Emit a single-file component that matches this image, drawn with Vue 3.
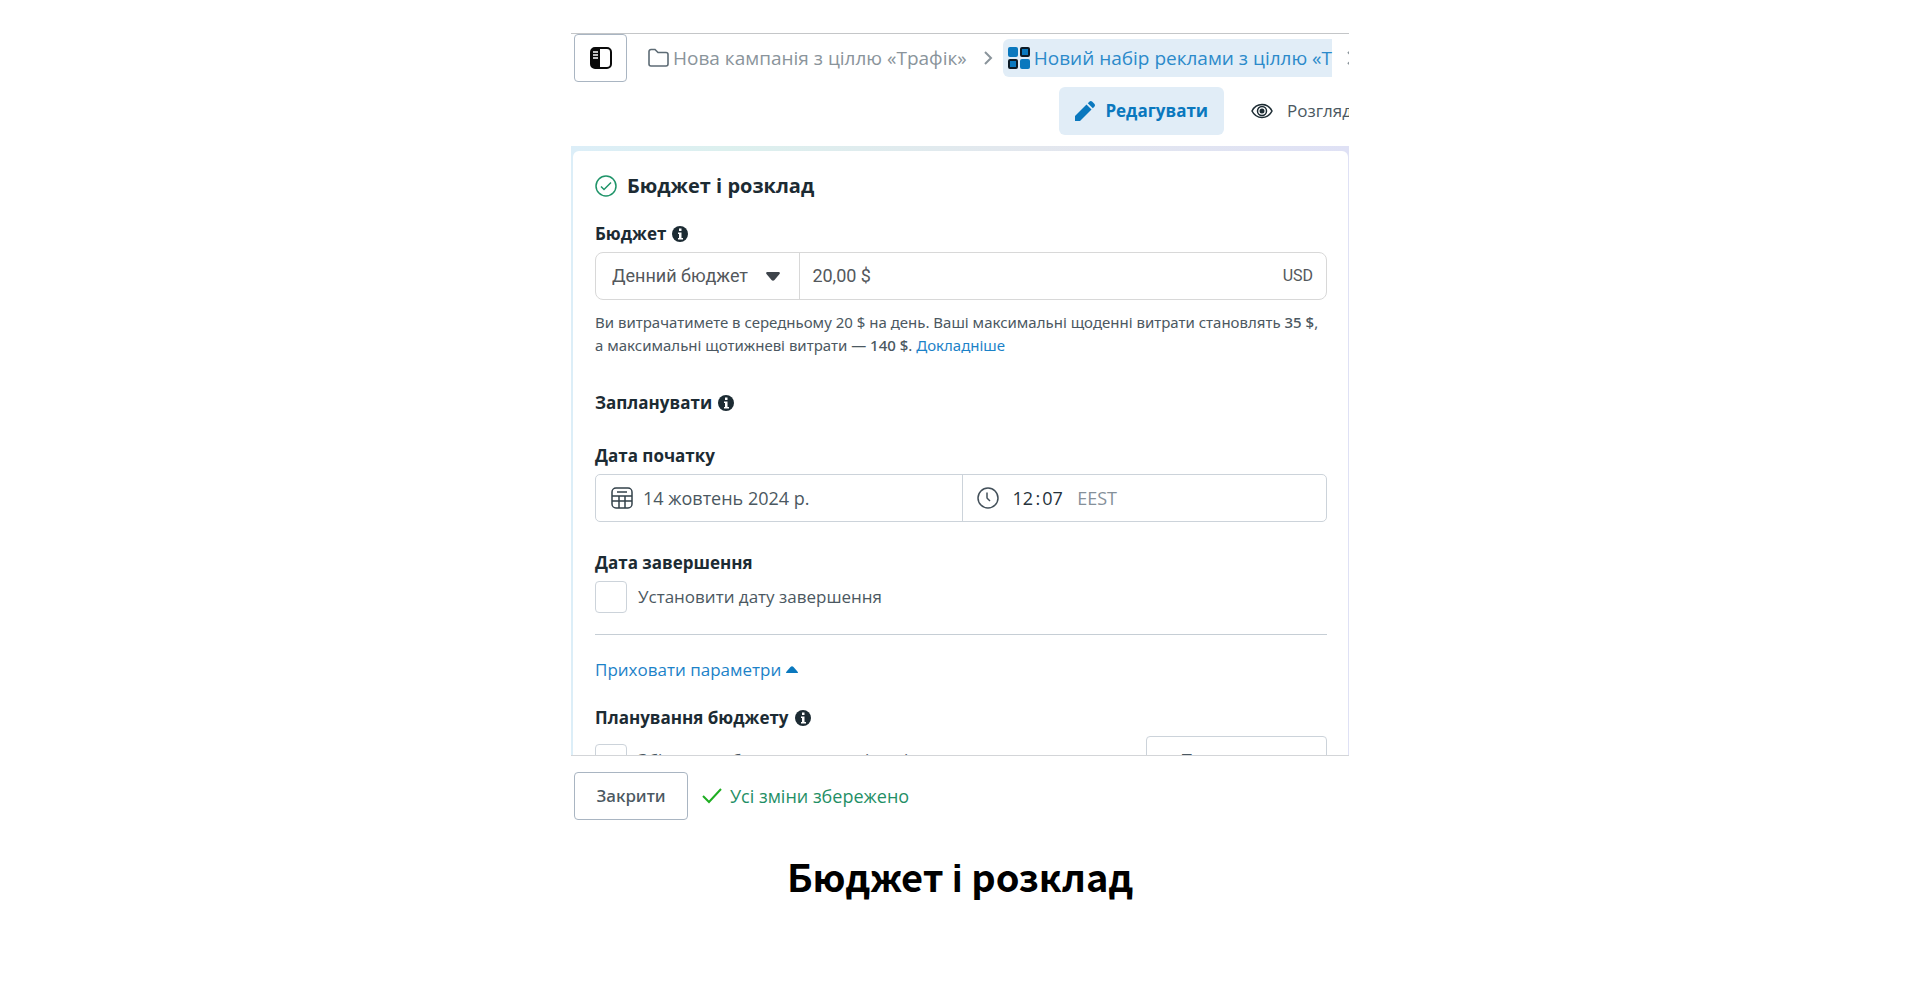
<template>
  <main class="page">
    <section class="panel">
      <header class="crumbs">
        <button class="toggle" type="button" aria-label="Панель">
          <svg width="22" height="22" viewBox="0 0 22 22">
            <rect x="1" y="1" width="20" height="20" rx="4" fill="#fff" stroke="#0a0a0a" stroke-width="2" />
            <path d="M5 1h5v20H5a4 4 0 0 1-4-4V5a4 4 0 0 1 4-4z" fill="#0a0a0a" />
            <path d="M3 5h5M3 8h5M3 11h5" stroke="#fff" stroke-width="1.300" />
          </svg>
        </button>
        <nav class="trail">
          <a href="#" class="crumb">
            <svg width="21" height="20" viewBox="0 0 21 20" fill="none" stroke="#5d6b75" stroke-width="1.6">
              <path d="M1 16V3.500a2 2 0 0 1 2-2h4l3 3h8a2 2 0 0 1 2 2V16a2 2 0 0 1-2 2H3a2 2 0 0 1-2-2z" />
            </svg>
            <span>Нова кампанія з ціллю «Трафік»</span>
          </a>
          <svg class="chevron" width="10" height="16" viewBox="0 0 10 16" fill="none" stroke="#8a949b" stroke-width="2">
            <path d="M2 2l6 6-6 6" />
          </svg>
          <a href="#" class="crumb active">
            <svg width="22" height="22" viewBox="0 0 22 22" fill="#0a78be">
              <rect x="0" y="0" width="10" height="10" rx="2" />
              <rect x="13" y="1" width="8" height="8" rx="1" stroke="#0b1a26" stroke-width="2" />
              <rect x="1" y="13" width="8" height="8" rx="1" stroke="#0b1a26" stroke-width="2" />
              <rect x="12" y="12" width="10" height="10" rx="2" />
            </svg>
            <span>Новий набір реклами з ціллю «Т</span>
          </a>
          <svg class="chevron last" width="10" height="16" viewBox="0 0 10 16" fill="none" stroke="#8a949b" stroke-width="2">
            <path d="M2 2l6 6-6 6" />
          </svg>
        </nav>
      </header>

      <div class="modes">
        <button class="mode selected" type="button">
          <svg width="20" height="20" viewBox="0 0 20 20" fill="#0a78be">
            <path d="M0 20v-5L11.500 3.500l5 5L5 20z" />
            <path d="M12.800 2.200l1.500-1.500a2.200 2.200 0 0 1 3 0l2 2a2.200 2.200 0 0 1 0 3l-1.500 1.500z" />
          </svg>
          Редагувати
        </button>
        <button class="mode" type="button">
          <svg width="22" height="16" viewBox="0 0 22 16" fill="none" stroke="#1c2b33">
            <path d="M1 8c2-4 6-6.500 10-6.500S19 4 21 8c-2 4-6 6.500-10 6.500S3 12 1 8z" stroke-width="1.500" />
            <circle cx="11" cy="8" r="4.500" stroke-width="1.500" />
            <circle cx="11" cy="8" r="2.500" fill="#1c2b33" stroke="none" />
          </svg>
          Розгляд
        </button>
      </div>

      <div class="viewport">
        <form class="card" @submit.prevent>
          <h2>
            <svg width="22" height="22" viewBox="0 0 22 22" fill="none" stroke="#1f9469" stroke-width="1.500">
              <circle cx="11" cy="11" r="10" />
              <path d="M6 11.500l3 3 7-7" />
            </svg>
            Бюджет і розклад
          </h2>

          <div class="label-row">
            <label for="amount">Бюджет</label>
            <svg class="info" viewBox="0 0 16 16">
              <circle cx="8" cy="8" r="8" fill="#1c2b33" />
              <path d="M7 2.500h2.500V5H7zM6 6.500h3.500V12H11v1.500H6V12h1V8H6z" fill="#fff" />
            </svg>
          </div>
          <div class="field budget">
            <div class="kind">
              <select v-model="kind" aria-label="Тип бюджету">
                <option>Денний бюджет</option>
              </select>
              <svg width="14" height="9" viewBox="0 0 14 9" fill="#3e444b">
                <path d="M1 0h12q1.500.5.500 2L8.500 8q-1.500 1.500-3 0L.500 2Q-.5.500 1 0z" />
              </svg>
            </div>
            <input id="amount" v-model="amount" type="text">
            <span class="currency">USD</span>
          </div>
          <p class="hint">
            Ви витрачатимете в середньому 20 $ на день. Ваші максимальні щоденні витрати становлять <b>35 $</b>,
            а максимальні щотижневі витрати <b>— 140 $</b>. <a href="#">Докладніше</a>
          </p>

          <div class="label-row schedule">
            <h3>Запланувати</h3>
            <svg class="info" viewBox="0 0 16 16">
              <circle cx="8" cy="8" r="8" fill="#1c2b33" />
              <path d="M7 2.500h2.500V5H7zM6 6.500h3.500V12H11v1.500H6V12h1V8H6z" fill="#fff" />
            </svg>
          </div>

          <div class="label-row start">
            <label for="date">Дата початку</label>
          </div>
          <div class="field moment">
            <div class="half">
              <svg width="22" height="22" viewBox="0 0 22 22" fill="none" stroke="#33414a" stroke-width="1.500">
                <rect x="1" y="1" width="20" height="20" rx="4" />
                <path d="M6 5h10M1 9h20M1 14h20M8 9v12M14 9v12" />
              </svg>
              <input id="date" v-model="date" type="text">
            </div>
            <div class="half">
              <svg width="22" height="22" viewBox="0 0 22 22" fill="none" stroke="#43505a" stroke-width="1.500">
                <circle cx="11" cy="11" r="10" />
                <path d="M10 5.500v5q0 1 1 1.500l2 2" />
              </svg>
              <div class="time">
                <input v-model="hours" type="text" aria-label="Години">
                <span>:</span>
                <input v-model="minutes" type="text" aria-label="Хвилини">
              </div>
              <span class="zone">EEST</span>
            </div>
          </div>

          <div class="label-row end">
            <h3>Дата завершення</h3>
          </div>
          <label class="check">
            <input v-model="hasEnd" type="checkbox">
            Установити дату завершення
          </label>

          <hr>

          <a href="#" class="collapse">
            Приховати параметри
            <svg width="12" height="8" viewBox="0 0 12 8" fill="#0a78be">
              <path d="M0 7q0-1 1-2l3.500-4q1.500-1.500 3 0L11 5q1 1 1 2z" />
            </svg>
          </a>

          <div class="label-row planning">
            <h3>Планування бюджету</h3>
            <svg class="info" viewBox="0 0 16 16">
              <circle cx="8" cy="8" r="8" fill="#1c2b33" />
              <path d="M7 2.500h2.500V5H7zM6 6.500h3.500V12H11v1.500H6V12h1V8H6z" fill="#fff" />
            </svg>
          </div>
          <div class="periods">
            <label class="check">
              <input v-model="hasPeriods" type="checkbox">
              Збільшити бюджет на певні періоди
            </label>
            <button class="outline" type="button">Переглянути</button>
          </div>
        </form>
      </div>

      <footer class="actions">
        <button class="close" type="button">Закрити</button>
        <span class="saved">
          <svg width="20" height="16" viewBox="0 0 20 16" fill="none" stroke="#1fae22" stroke-width="2">
            <path d="M1 8l6 6L19 1" />
          </svg>
          Усі зміни збережено
        </span>
      </footer>
    </section>

    <h1>Бюджет і розклад</h1>
  </main>
</template>

<script setup>
import { ref } from 'vue';

const kind = ref('Денний бюджет');
const amount = ref('20,00 $');
const date = ref('14 жовтень 2024 р.');
const hours = ref('12');
const minutes = ref('07');
const hasEnd = ref(false);
const hasPeriods = ref(false);
</script>

<style>
body {
  margin: 0;
  background: #fff;
}
</style>

<style scoped>
* {
  box-sizing: border-box;
}

.page {
  padding: 33px 16px 0;
  font-family: 'Open Sans', 'Noto Sans', sans-serif;
  font-size: 18px;
  line-height: 24px;
  color: #4b5861;
}

button,
input,
select {
  font: inherit;
  color: inherit;
}

button {
  cursor: pointer;
}

a {
  color: #1c82c8;
  text-decoration: none;
}

svg {
  flex: none;
}

.panel {
  max-width: 778px;
  margin: 0 auto;
  border-top: 1px solid #c4c6c8;
  overflow: hidden;
}

.crumbs {
  display: flex;
  align-items: center;
  padding-left: 3px;
}

.toggle {
  flex: none;
  display: flex;
  align-items: center;
  justify-content: center;
  width: 53px;
  height: 48px;
  padding: 0;
  background: #fff;
  border: 1px solid #a9b5c2;
  border-radius: 4px;
}

.trail {
  flex: 1;
  display: flex;
  align-items: center;
  min-width: 0;
  margin-left: 16px;
}

.crumb {
  display: flex;
  align-items: center;
  gap: 4px;
  height: 38px;
  padding: 0 4px 0 5px;
  font-size: 19px;
  color: #8a949b;
  white-space: nowrap;
}

.crumb.active {
  flex: 1;
  padding-right: 0;
  color: #2b8aca;
  background: #e1edf7;
  border-radius: 6px 0 0 6px;
}

.chevron {
  flex: none;
  margin: 0 10px 0 12px;
}

.chevron.last {
  margin: 0 -6px 0 14px;
}

.modes {
  display: flex;
  justify-content: flex-end;
  gap: 12px;
  margin: 5px -3px 0 0;
}

.mode {
  display: flex;
  align-items: center;
  gap: 14px;
  height: 48px;
  padding: 0 0 0 15px;
  font-size: 17px;
  white-space: nowrap;
  background: none;
  border: 0;
  border-radius: 6px;
}

.mode.selected {
  gap: 10px;
  padding: 0 16px;
  font-weight: 700;
  color: #0a78be;
  background: #e1edf7;
}

/* The form is cut off at the bottom edge, as a scrolled area */
.viewport {
  max-height: 610px;
  margin-top: 11px;
  padding: 5px 1px 0 2px;
  overflow: hidden;
  background: linear-gradient(90deg, #dceef8, #dcf0ee 20%, #e3e7ee 60%, #dfe1f5);
  border-bottom: 1px solid #d3d5d8;
}

.card {
  padding: 20px 21px 0 22px;
  background: #fff;
  border-radius: 6px 6px 0 0;
}

h2 {
  display: flex;
  align-items: center;
  gap: 10px;
  margin: 0;
  font-size: 20px;
  line-height: 30px;
  color: #1c2b33;
}

.label-row {
  display: flex;
  align-items: center;
  gap: 6px;
  margin-top: 21px;
  font-size: 17px;
  font-weight: 700;
  color: #1c2b33;
}

h3 {
  margin: 0;
  font: inherit;
}

.info {
  width: 16px;
  height: 16px;
}

.field {
  display: flex;
  height: 48px;
  margin-top: 6px;
  border: 1px solid #ccd3da;
  border-radius: 5px;
}

.field input,
.field select {
  min-width: 0;
  padding: 0;
  background: none;
  border: 0;
  outline: 0;
}

.budget {
  align-items: center;
  font-family: Roboto, sans-serif;
  color: #54585c;
  border-color: #d8d8d8;
  border-radius: 8px;
}

.kind {
  display: flex;
  align-items: center;
  gap: 12px;
  width: 28%;
  height: 100%;
  padding: 0 19px 0 16px;
  border-right: 1px solid #d8d8d8;
}

.kind select {
  flex: 1;
  appearance: none;
}

.budget > input {
  flex: 1;
  padding-left: 12px;
}

.currency {
  padding: 0 13px;
  font-size: 16px;
}

.hint {
  margin: 11px 0 0;
  font-family: 'Noto Sans', sans-serif;
  font-size: 15px;
  line-height: 23px;
}

.hint b {
  font-weight: 500;
}

.schedule {
  margin-top: 34px;
}

.start {
  margin-top: 29px;
}

.half {
  flex: 1;
  display: flex;
  align-items: center;
  gap: 10px;
  padding: 0 15px;
}

.half + .half {
  gap: 14px;
  padding: 0 14px;
  border-left: 1px solid #ccd3da;
}

.half > input {
  flex: 1;
}

.time {
  display: flex;
  gap: 2px;
  color: #26323b;
}

.time input {
  width: 21px;
}

.zone {
  color: #85909a;
}

.end {
  margin-top: 29px;
}

.check {
  display: flex;
  align-items: center;
  gap: 11px;
  margin-top: 6px;
  font-size: 17px;
}

.check input {
  flex: none;
  appearance: none;
  width: 32px;
  height: 32px;
  margin: 0;
  background: #fff;
  border: 1px solid #ccd3da;
  border-radius: 4px;
}

hr {
  height: 1px;
  margin: 21px 0 0;
  background: #c6ced5;
  border: 0;
}

.collapse {
  display: flex;
  align-items: center;
  gap: 5px;
  margin-top: 23px;
  font-size: 17px;
}

.planning {
  margin-top: 24px;
}

.periods {
  display: flex;
  align-items: center;
  justify-content: space-between;
  margin-top: 6px;
}

.periods .check {
  margin: 0;
}

.outline {
  width: 181px;
  height: 48px;
  background: #fff;
  border: 1px solid #ccd3da;
  border-radius: 4px;
}

.actions {
  display: flex;
  align-items: center;
  gap: 14px;
  padding: 16px 0 0 3px;
}

.close {
  width: 114px;
  height: 48px;
  font-family: 'Noto Sans', sans-serif;
  font-size: 17px;
  font-weight: 500;
  background: #fff;
  border: 1px solid #a9b5c2;
  border-radius: 4px;
}

.saved {
  display: flex;
  align-items: center;
  gap: 8px;
  color: #1f8f66;
}

h1 {
  margin: 28px 0 0;
  font-family: 'Noto Sans CJK SC', sans-serif;
  font-size: 38px;
  line-height: 56px;
  text-align: center;
  color: #000;
}
</style>
